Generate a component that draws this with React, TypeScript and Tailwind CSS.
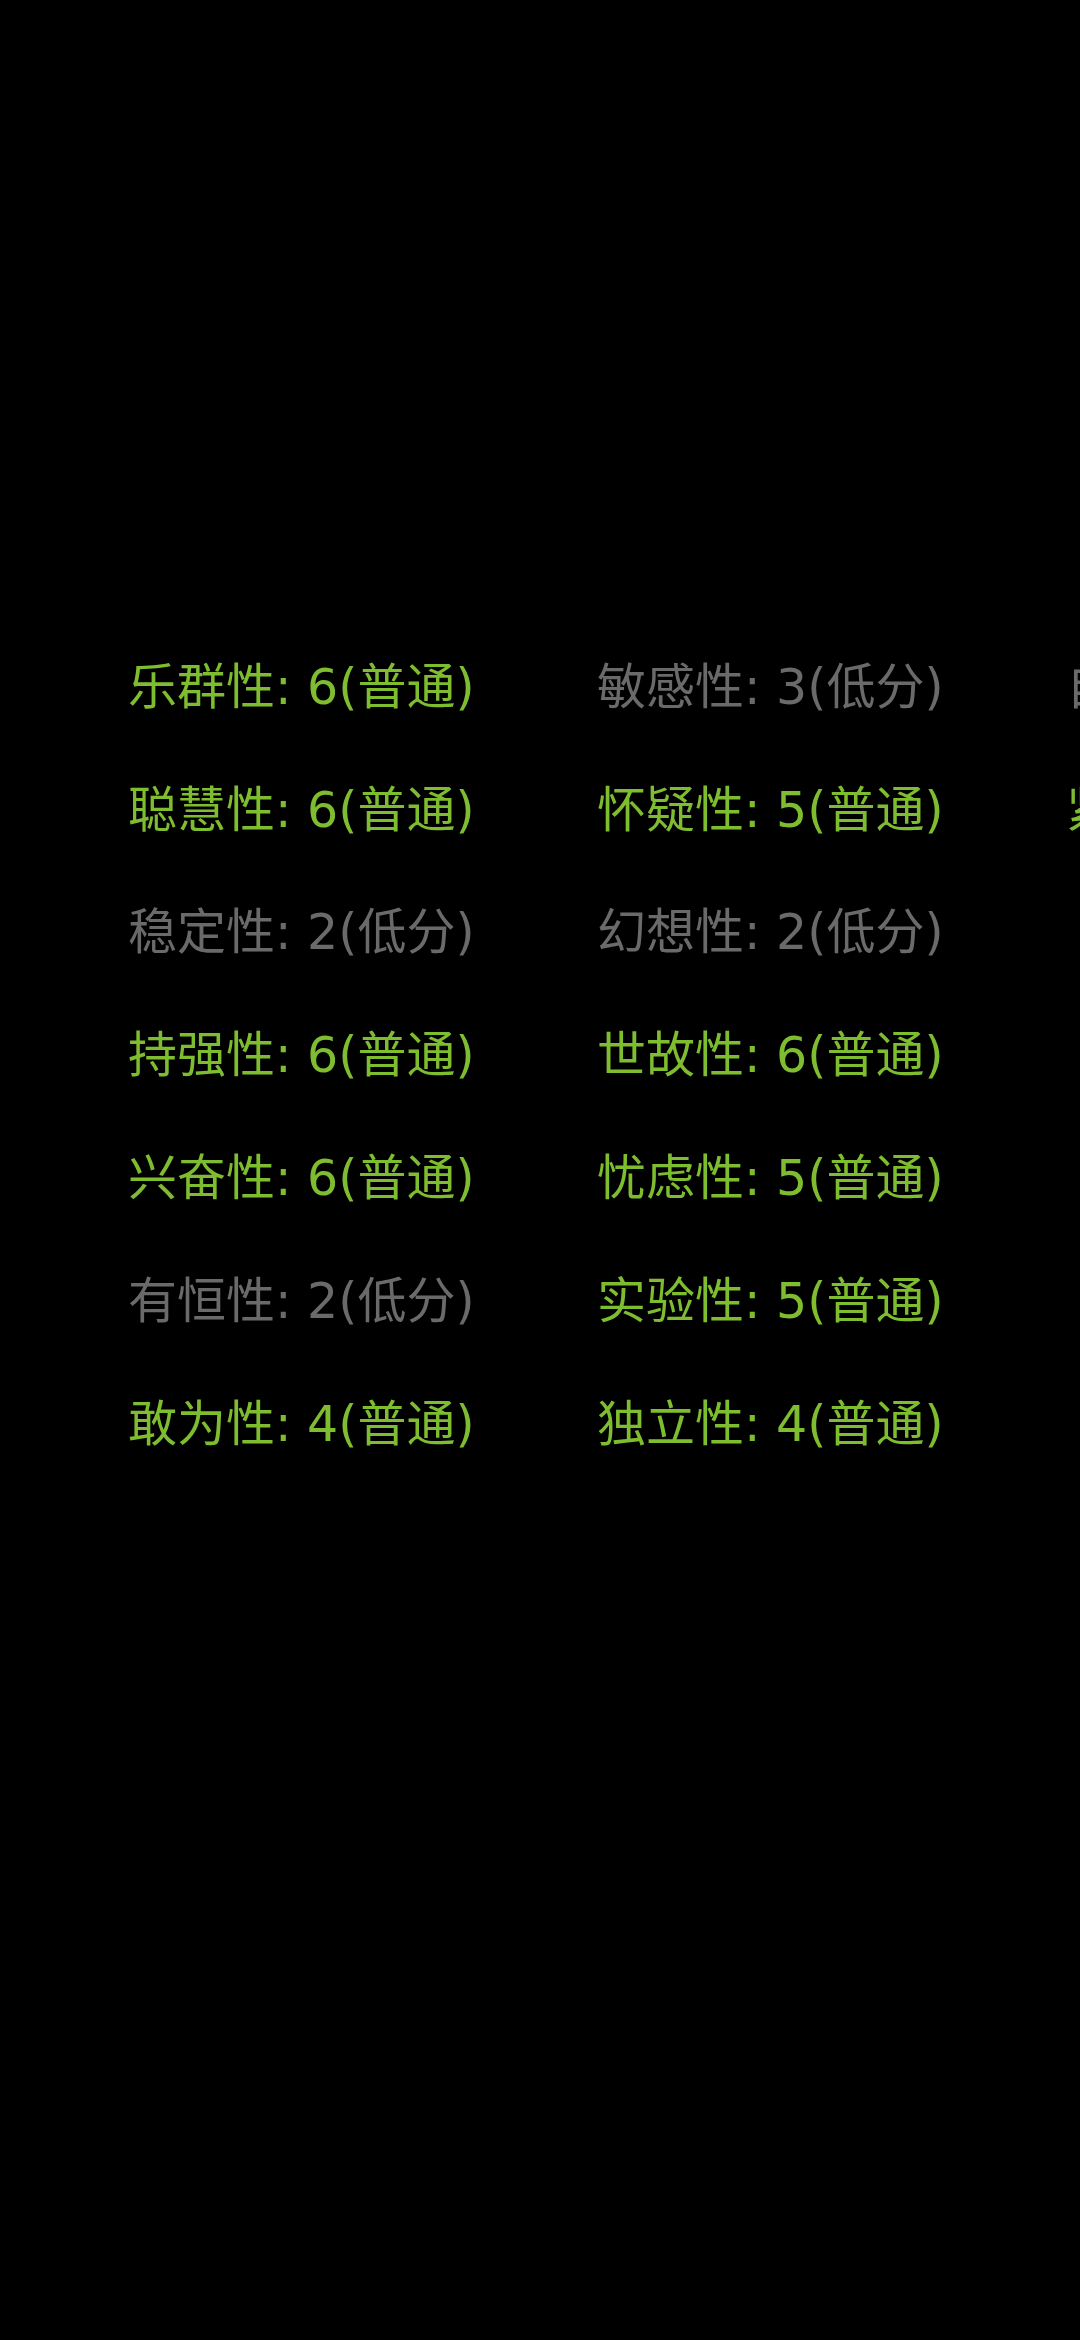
import React from "react";

type Item = { label: string; score: number; level: string };

const rows: Item[][] = [
  [
    { label: "乐群性", score: 6, level: "普通" },
    { label: "敏感性", score: 3, level: "低分" },
    { label: "自律性", score: 3, level: "低分" },
  ],
  [
    { label: "聪慧性", score: 6, level: "普通" },
    { label: "怀疑性", score: 5, level: "普通" },
    { label: "紧张性", score: 5, level: "普通" },
  ],
  [
    { label: "稳定性", score: 2, level: "低分" },
    { label: "幻想性", score: 2, level: "低分" },
  ],
  [
    { label: "持强性", score: 6, level: "普通" },
    { label: "世故性", score: 6, level: "普通" },
  ],
  [
    { label: "兴奋性", score: 6, level: "普通" },
    { label: "忧虑性", score: 5, level: "普通" },
  ],
  [
    { label: "有恒性", score: 2, level: "低分" },
    { label: "实验性", score: 5, level: "普通" },
  ],
  [
    { label: "敢为性", score: 4, level: "普通" },
    { label: "独立性", score: 4, level: "普通" },
  ],
];

export default function App() {
  return (
    <div
      className="w-[1080px] min-h-[2340px] bg-black overflow-hidden"
      style={{ fontFamily: '"DejaVu Sans", "Noto Sans CJK SC", sans-serif' }}
    >
      <div className="pt-[626px] pl-[128px] flex flex-col">
        {rows.map((row, i) => (
          <div key={i} className="h-[122.8px] flex items-center">
            {row.map((it, j) => (
              <div
                key={j}
                className={
                  "w-[469px] shrink-0 whitespace-nowrap text-[49px] leading-none " +
                  (it.level === "普通" ? "text-[#7fbd30]" : "text-[#6a6a6a]")
                }
              >
                {it.label}: {it.score}({it.level})
              </div>
            ))}
          </div>
        ))}
      </div>
    </div>
  );
}
